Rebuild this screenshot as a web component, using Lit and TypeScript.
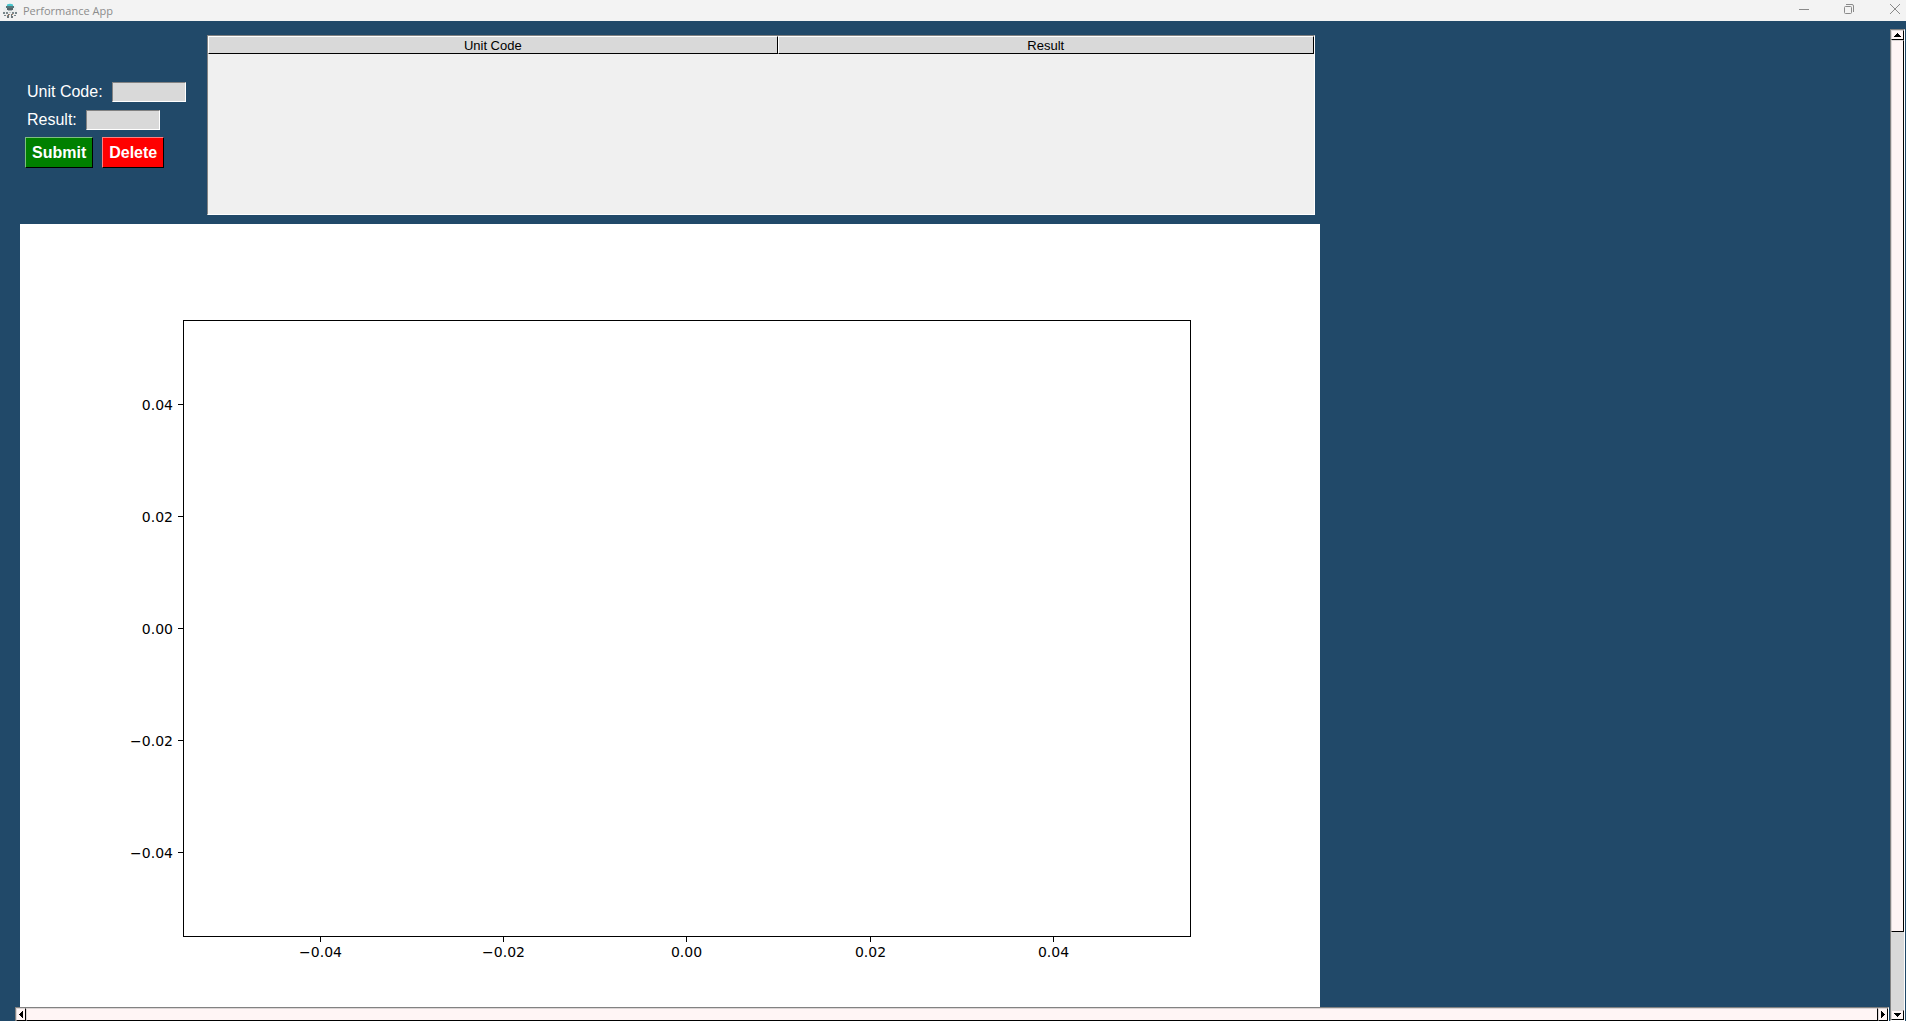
import { LitElement, html, css, svg } from "lit";
import { customElement } from "lit/decorators.js";

const TICKS = [-0.04, -0.02, 0, 0.02, 0.04];
const label = (v: number) => (v < 0 ? "\u2212" : "") + Math.abs(v).toFixed(2);

/** Empty figure with symmetric linear axes. */
@customElement("performance-chart")
class PerformanceChart extends LitElement {
  static styles = css`
    :host { display: block; background: #fff; }
    .figure { display: block; width: 100%; height: auto; font-family: "DejaVu Sans", sans-serif; font-size: 14px; }
    .line { fill: none; stroke: #000; stroke-width: 1; shape-rendering: crispEdges; }
    .x { text-anchor: middle; }
    .y { text-anchor: end; }
  `;

  render() {
    const px = (v: number) => Math.round(666.4 + v * 9160) + 0.5;
    const py = (v: number) => Math.round(404 - v * 5600) + 0.5;
    return html`
      <svg class="figure" viewBox="0 0 1300 783" role="img" aria-label="Results chart">
        <rect class="line" x="163.5" y="96.5" width="1007" height="616"></rect>
        ${TICKS.map(
          (v) => svg`
            <line class="line" x1=${px(v)} x2=${px(v)} y1="713" y2="718"></line>
            <text class="x" x=${px(v)} y="733">${label(v)}</text>
            <line class="line" x1="158" x2="163" y1=${py(v)} y2=${py(v)}></line>
            <text class="y" x="153" y=${py(v) + 5}>${label(v)}</text>`
        )}
      </svg>
    `;
  }
}

@customElement("app-root")
class AppRoot extends LitElement {
  static styles = css`
    :host {
      display: flex;
      flex-direction: column;
      height: 100vh;
      overflow: hidden;
      background: #214969;
      font-family: "Liberation Sans", Arial, sans-serif;
    }
    * { box-sizing: border-box; }
    .titlebar {
      display: flex;
      align-items: center;
      flex: none;
      height: 21px;
      padding: 0 2px;
      background: #f3f3f3;
      color: #8c8c8c;
      font: 11px/20px "Open Sans", "Noto Sans", sans-serif;
    }
    .logo { width: 16px; height: 16px; margin-right: 5px; }
    .title { flex: 1; font: inherit; margin: 0; }
    .controls { display: flex; gap: 29px; }
    .control { display: flex; width: 16px; height: 16px; padding: 0; border: 0; background: none; }
    .control svg { fill: none; stroke: #8a8a8a; }
    .workspace {
      display: grid;
      flex: 1;
      min-height: 0;
      grid-template-columns: minmax(0, 1fr) 15px;
      padding: 8px 1px 0 0;
    }
    .view { display: flex; flex-direction: column; min-width: 0; min-height: 0; padding-left: 15px; }
    .content { flex: 1; min-height: 0; overflow: hidden; padding: 6px 5px 0; }
    .page { width: 100%; max-width: 1300px; }
    .top { display: flex; gap: 20px; padding: 0 5px 9px; }
    .entry { display: flex; flex-direction: column; flex: none; width: 162px; padding-top: 43px; }
    .field {
      display: flex;
      align-items: center;
      gap: 9px;
      height: 28px;
      padding-left: 2px;
      color: #fff;
      font-size: 16px;
      white-space: nowrap;
    }
    .input {
      width: 74px;
      height: 20px;
      padding: 0 2px;
      border: 1px solid;
      border-color: #828282 #fff #fff #828282;
      border-radius: 0;
      background: #d9d9d9;
      font: inherit;
    }
    .actions { display: flex; gap: 9px; padding-top: 3px; }
    .button {
      height: 31px;
      padding: 0 6px;
      border: 1px solid;
      border-radius: 0;
      color: #fff;
      font: bold 16px/28px "Liberation Sans", Arial, sans-serif;
    }
    .submit { background: #008000; border-color: #7fbf7f #000 #000 #7fbf7f; }
    .delete { background: #f00; border-color: #ff8080 #000 #000 #ff8080; }
    .results {
      flex: 1;
      min-width: 0;
      height: 180px;
      border: 1px solid;
      border-color: #828282 #fff #fff #828282;
      background: #f0f0f0;
    }
    .table { width: 100%; border-collapse: separate; border-spacing: 0; table-layout: fixed; }
    .table th {
      height: 18px;
      padding: 1px 0 0;
      border: 1px solid;
      border-color: #fff #000 #000 #fff;
      background: #d9d9d9;
      font-weight: normal;
      font-size: 13px;
      line-height: 15px;
    }
    .code { width: 51.5%; }
    .bar { display: flex; border: 1px solid; border-color: #828282 #fff #fff #828282; background: #d9d9d9; }
    .bar.vertical { flex-direction: column; }
    .bar.horizontal { flex: none; height: 14px; margin-right: 1px; border-bottom: 0; }
    .part { background: #fff5f5; border: 1px solid; border-color: #dcd6d6 #000 #000 #dcd6d6; }
    .arrow { display: flex; flex: none; align-items: center; justify-content: center; padding: 0; border-radius: 0; }
    .vertical .arrow { height: 10px; width: 100%; }
    .horizontal .arrow { width: 10px; height: 100%; }
    .vertical .thumb { flex: 892; }
    .vertical .rest { flex: 78; }
    .horizontal .thumb { flex: 1; }
  `;

  private arrow(name: string, w: number, h: number, d: string) {
    return html`<button class="part arrow" aria-label=${name}>
      <svg width=${w} height=${h} viewBox="0 0 ${w} ${h}"><path d=${d} shape-rendering="crispEdges"></path></svg>
    </button>`;
  }

  render() {
    return html`
      <header class="titlebar">
        <svg class="logo" viewBox="0 0 16 16" aria-hidden="true">
          <circle cx="8" cy="8" r="7" fill="#eceeee"></circle>
          <path d="M5 3V1.500Q8 0 11 1.500V3Z" fill="#48c7ce"></path>
          <path d="M4 3H12V5H4Z" fill="#55777b"></path>
          <path d="M5 5H11V7H5Z" fill="#58656a"></path>
          <path d="M6 7H10V8H6Z" fill="#a9b5b8"></path>
          <path d="M4 9H6V11H4ZM10 9H12V11H10Z" fill="#7b888c"></path>
          <path d="M7 9H9V10H7Z" fill="#c3cdcf"></path>
          <path d="M1 9H3V11H1ZM13 9H15V11H13ZM2 12H4V13H2ZM12 12H14V13H12Z" fill="#78868a"></path>
          <path d="M6 11H7V15H5V13H6ZM9 11H10V13H11V15H9Z" fill="#6c777b"></path>
          <path d="M7 11H8V12H7ZM10 11H11V12H10ZM5 12H6V13H5Z" fill="#b98a6c"></path>
        </svg>
        <h1 class="title">Performance App</h1>
        <div class="controls">
          <button class="control" aria-label="Minimize"><svg width="16" height="16"><path d="M1 6.500H11"></path></svg></button>
          <button class="control" aria-label="Restore"><svg width="16" height="16"><rect x="1.5" y="3.5" width="7" height="7" rx="1"></rect><path d="M3 1.500H9Q10.500 1.500 10.500 3V9"></path></svg></button>
          <button class="control" aria-label="Close"><svg width="16" height="16"><path d="M2 1L12 11M12 1L2 11"></path></svg></button>
        </div>
      </header>
      <main class="workspace">
        <div class="view">
          <div class="content">
            <div class="page">
              <section class="top">
                <form class="entry" @submit=${(e: Event) => e.preventDefault()}>
                  <div class="field"><label for="code">Unit Code:</label><input class="input" id="code" /></div>
                  <div class="field"><label for="result">Result:</label><input class="input" id="result" /></div>
                  <div class="actions">
                    <button class="button submit" type="submit">Submit</button>
                    <button class="button delete" type="button">Delete</button>
                  </div>
                </form>
                <div class="results">
                  <table class="table">
                    <thead><tr><th class="code" scope="col">Unit Code</th><th scope="col">Result</th></tr></thead>
                    <tbody></tbody>
                  </table>
                </div>
              </section>
              <performance-chart></performance-chart>
            </div>
          </div>
          <div class="bar horizontal">
            ${this.arrow("Scroll left", 4, 7, "M4 0V7L0 3.500Z")}
            <div class="part thumb"></div>
            ${this.arrow("Scroll right", 4, 7, "M0 0V7L4 3.500Z")}
          </div>
        </div>
        <div class="bar vertical">
          ${this.arrow("Scroll up", 7, 4, "M0 4H7L3.500 0Z")}
          <div class="part thumb"></div>
          <div class="rest"></div>
          ${this.arrow("Scroll down", 7, 4, "M0 0H7L3.500 4Z")}
        </div>
      </main>
    `;
  }
}
